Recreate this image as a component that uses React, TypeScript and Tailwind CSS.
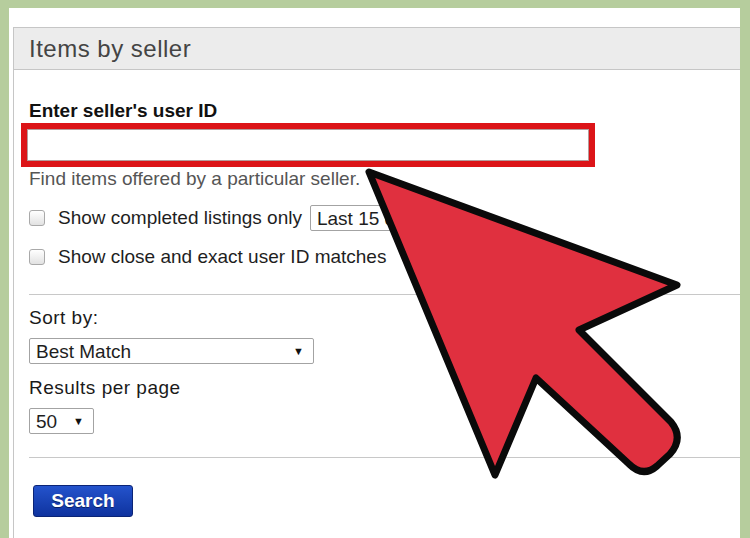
const Checkbox = () => (
  <span className="h-[16px] w-[16px] shrink-0 rounded-[3px] border border-[#a9a9a9] bg-gradient-to-b from-white to-[#e2e2e2]" />
);

type SelectProps = {
  value: string;
  className?: string;
};

const FakeSelect = ({ value, className = '' }: SelectProps) => (
  <div
    className={`flex h-[26px] shrink-0 items-center justify-between overflow-hidden whitespace-nowrap rounded-[2px] border border-[#a3a3a3] bg-white pl-[6px] pr-[9px] text-[19px] leading-none text-[#1e1e1e] ${className}`}
  >
    <span>{value}</span>
    <span className="text-[11px] text-[#111]">▼</span>
  </div>
);

// big red pointer drawn over the form
const PointerArrow = () => (
  <svg
    className="pointer-events-none absolute left-0 top-0"
    width={750}
    height={538}
    viewBox="0 0 750 538"
  >
    <path
      d="M369 172 L677 285 L579 330 L671 422 Q684 438 670 454 L657 466 Q643 478 629 464 L536 378 L495 475 Z"
      fill="#e0303f"
      stroke="#0a0a0a"
      strokeWidth={7}
      strokeLinejoin="round"
    />
  </svg>
);

const App: React.FC = () => {
  return (
    <div className="relative h-[538px] w-[750px] overflow-hidden bg-[#b6cd9d] pl-[9px] pr-[10px] pt-[8px] font-['Liberation_Sans',Arial,sans-serif]">
      <div className="h-full bg-white pl-[4px] pt-[19px]">
        <div className="h-full border-l border-t border-[#c6c6c6]">
          {/* header */}
          <div className="flex h-[42px] items-center border-b border-[#c6c6c6] bg-[#ececec] pl-[15px]">
            <h2 className="text-[24px] leading-none tracking-[0.5px] text-[#444]">Items by seller</h2>
          </div>

          <div className="pl-[15px]">
            {/* seller id */}
            <div className="mt-[30px] text-[19px] font-bold leading-[22px] text-[#111]">
              Enter seller's user ID
            </div>
            <div className="ml-[-8px] mt-[1px] w-[574px] border-[6px] border-[#dc1418]">
              <input
                type="text"
                className="block h-[32px] w-full border border-[#b59c9c] bg-white px-1 outline-none"
              />
            </div>
            <div className="mt-[2px] text-[19px] leading-[20px] text-[#555]">
              Find items offered by a particular seller.
            </div>

            {/* options */}
            <div className="mt-[16px] flex h-[26px] items-center">
              <Checkbox />
              <span className="ml-[13px] whitespace-nowrap text-[19px] text-[#1e1e1e]">
                Show completed listings only
              </span>
              <FakeSelect value="Last 15 days" className="ml-[8px] w-[140px]" />
            </div>
            <div className="mt-[13px] flex h-[26px] items-center">
              <Checkbox />
              <span className="ml-[13px] whitespace-nowrap text-[19px] text-[#1e1e1e]">
                Show close and exact user ID matches
              </span>
            </div>

            <div className="mt-[24px] border-t border-[#c8c8c8]" />

            {/* sorting */}
            <div className="mt-[12px] text-[19px] leading-[22px] tracking-[0.5px] text-[#1a1a1a]">Sort by:</div>
            <FakeSelect value="Best Match" className="mt-[9px] w-[285px]" />
            <div className="mt-[13px] text-[19px] leading-[22px] tracking-[0.5px] text-[#1a1a1a]">
              Results per page
            </div>
            <FakeSelect value="50" className="mt-[9px] w-[65px]" />

            <div className="mt-[23px] border-t border-[#c8c8c8]" />

            <button
              type="button"
              className="ml-[4px] mt-[27px] flex h-[32px] w-[100px] items-center justify-center rounded-[3px] border border-[#0b2476] bg-gradient-to-b from-[#2453cc] to-[#0f339f] text-[19px] font-bold text-white [text-shadow:0_1px_0_#0a1f66]"
            >
              Search
            </button>
          </div>
        </div>
      </div>
      <PointerArrow />
    </div>
  );
};

export default App;
